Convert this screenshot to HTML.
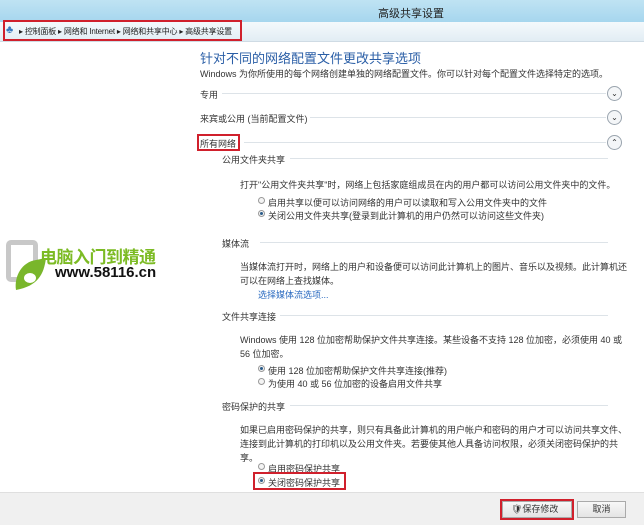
<!DOCTYPE html>
<html><head><meta charset="utf-8"><style>
*{margin:0;padding:0;box-sizing:border-box}
body{width:644px;height:525px;position:relative;overflow:hidden;background:#fff;font-family:"Liberation Sans","Noto Sans CJK SC",sans-serif;color:#333;font-size:9px}
.a{position:absolute;white-space:nowrap}
.line{position:absolute;height:1px;background:#dde3e8}
.chev{position:absolute;width:15px;height:15px;border-radius:50%;border:1px solid #9aa4ae;background:#f4f6f8;font-size:8px;line-height:13px;text-align:center;color:#333}
.rb{position:absolute;width:7px;height:7px;border-radius:50%;border:1px solid #999;background:#f4f4f4}
.rb.on::after{content:"";position:absolute;left:1px;top:1px;width:3px;height:3px;border-radius:50%;background:#2a5c8a}
.red{position:absolute;border:2px solid #d0202c}
</style></head><body>
<div class="a" style="left:0;top:0;width:644px;height:22px;background:linear-gradient(#bfe3f3,#a6d6ee)"></div>
<div class="a" style="left:378px;top:5px;font-size:11px;color:#222">高级共享设置</div>
<div class="a" style="left:0;top:22px;width:644px;height:20px;background:linear-gradient(#f4f9fc,#e2edf4);border-bottom:1px solid #cfdbe4"></div>
<div class="a" style="left:6px;top:24px;font-size:11px;color:#3a7bc0">♣</div>
<div class="a" style="left:19px;top:26px;font-size:8px;color:#222;letter-spacing:-0.2px">▸ 控制面板 ▸ 网络和 Internet ▸ 网络和共享中心 ▸ 高级共享设置</div>
<div class="red" style="left:3px;top:20px;width:239px;height:21px"></div>

<div class="a" style="left:200px;top:48px;font-size:13px;color:#2a5ea6">针对不同的网络配置文件更改共享选项</div>
<div class="a" style="left:200px;top:67px;font-size:9px">Windows 为你所使用的每个网络创建单独的网络配置文件。你可以针对每个配置文件选择特定的选项。</div>
<div class="a" style="left:200px;top:88px">专用</div><div class="line" style="left:222px;top:93px;width:384px"></div><div class="chev" style="left:607px;top:86px">⌄</div>
<div class="a" style="left:200px;top:112px">来宾或公用 (当前配置文件)</div><div class="line" style="left:310px;top:117px;width:296px"></div><div class="chev" style="left:607px;top:110px">⌄</div>
<div class="a" style="left:200px;top:137px">所有网络</div><div class="red" style="left:197px;top:134px;width:43px;height:17px"></div><div class="line" style="left:244px;top:142px;width:362px"></div><div class="chev" style="left:607px;top:135px">⌃</div>

<div class="a" style="left:222px;top:153px">公用文件夹共享</div><div class="line" style="left:290px;top:158px;width:318px"></div>
<div class="a" style="left:240px;top:178px">打开"公用文件夹共享"时，网络上包括家庭组成员在内的用户都可以访问公用文件夹中的文件。</div>
<div class="rb" style="left:258px;top:197px"></div><div class="a" style="left:268px;top:196px">启用共享以便可以访问网络的用户可以读取和写入公用文件夹中的文件</div>
<div class="rb on" style="left:258px;top:210px"></div><div class="a" style="left:268px;top:209px">关闭公用文件夹共享(登录到此计算机的用户仍然可以访问这些文件夹)</div>

<div class="a" style="left:222px;top:237px">媒体流</div><div class="line" style="left:260px;top:242px;width:348px"></div>
<div class="a" style="left:240px;top:260px">当媒体流打开时，网络上的用户和设备便可以访问此计算机上的图片、音乐以及视频。此计算机还</div>
<div class="a" style="left:240px;top:274px">可以在网络上查找媒体。</div>
<div class="a" style="left:258px;top:288px;color:#2a6ac0">选择媒体流选项...</div>

<div class="a" style="left:222px;top:310px">文件共享连接</div><div class="line" style="left:280px;top:315px;width:328px"></div>
<div class="a" style="left:240px;top:333px">Windows 使用 128 位加密帮助保护文件共享连接。某些设备不支持 128 位加密，必须使用 40 或</div>
<div class="a" style="left:240px;top:347px">56 位加密。</div>
<div class="rb on" style="left:258px;top:365px"></div><div class="a" style="left:268px;top:364px">使用 128 位加密帮助保护文件共享连接(推荐)</div>
<div class="rb" style="left:258px;top:378px"></div><div class="a" style="left:268px;top:377px">为使用 40 或 56 位加密的设备启用文件共享</div>

<div class="a" style="left:222px;top:400px">密码保护的共享</div><div class="line" style="left:290px;top:405px;width:318px"></div>
<div class="a" style="left:240px;top:423px">如果已启用密码保护的共享，则只有具备此计算机的用户帐户和密码的用户才可以访问共享文件、</div>
<div class="a" style="left:240px;top:437px">连接到此计算机的打印机以及公用文件夹。若要使其他人具备访问权限，必须关闭密码保护的共</div>
<div class="a" style="left:240px;top:451px">享。</div>
<div class="rb" style="left:258px;top:463px"></div><div class="a" style="left:268px;top:462px">启用密码保护共享</div>
<div class="rb on" style="left:258px;top:477px"></div><div class="a" style="left:268px;top:476px">关闭密码保护共享</div>
<div class="red" style="left:253px;top:472px;width:93px;height:18px"></div>

<div class="a" style="left:0;top:492px;width:644px;height:33px;background:#f0f0f0;border-top:1px solid #dfdfdf"></div>
<div class="a" style="left:502px;top:501px;width:70px;height:17px;border:1px solid #aaa;background:linear-gradient(#f8f8f8,#e4e4e4);font-size:9px;line-height:15px;padding-left:8px">🛡保存修改</div>
<div class="red" style="left:500px;top:499px;width:74px;height:21px"></div>
<div class="a" style="left:577px;top:501px;width:49px;height:17px;border:1px solid #aaa;background:linear-gradient(#f8f8f8,#e4e4e4);font-size:9px;line-height:15px;text-align:center">取消</div>

<div class="a" style="left:6px;top:240px;width:32px;height:42px;border:5px solid #c8c8c8;border-radius:5px;background:#fff"></div>
<svg class="a" style="left:14px;top:256px" width="34" height="36" viewBox="0 0 34 36"><path d="M2 34 C0 20 8 6 22 4 L32 2 C30 18 24 30 2 34Z" fill="#79b62b"/><ellipse cx="16" cy="22" rx="6" ry="5" fill="#fff"/></svg>
<div class="a" style="left:40px;top:243px;font-size:17px;font-weight:bold;color:#7cbb24;letter-spacing:-0.5px">电脑入门到精通</div>
<div class="a" style="left:55px;top:264px;font-size:15px;font-weight:bold;color:#111">www.58116.cn</div>
</body></html>
